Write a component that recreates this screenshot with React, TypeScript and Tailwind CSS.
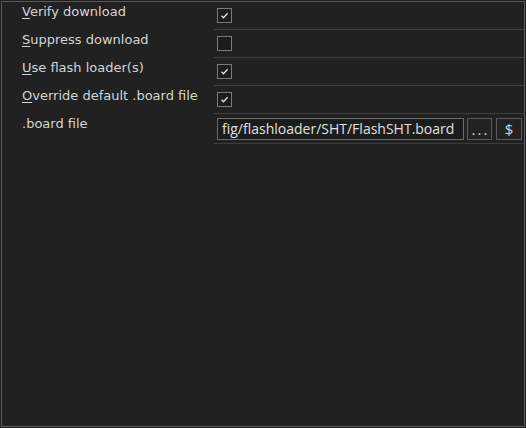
import React from "react";

const labelFont = { fontFamily: '"DejaVu Sans", Verdana, sans-serif' };

function Check({ checked }: { checked: boolean }) {
  return (
    <div className="w-[15px] h-[15px] border border-[#7a7a7a] bg-[#1c1c1c] flex items-center justify-center">
      {checked && (
        <svg width="11" height="11" viewBox="0 0 11 11">
          <path d="M2.5 5.8 L4.5 7.8 L8.6 3.2" stroke="#e0e0e0" strokeWidth="1.3" fill="none" />
        </svg>
      )}
    </div>
  );
}

function Label({ k, rest }: { k: string; rest: string }) {
  return (
    <div className="pl-[20px] pt-[1px] text-[13px] text-[#d4d4d4] leading-[18px]" style={labelFont}>
      {k && <span className="underline underline-offset-2">{k}</span>}
      {rest}
    </div>
  );
}

export default function App() {
  const rows = [
    { k: "V", rest: "erify download", checked: true },
    { k: "S", rest: "uppress download", checked: false },
    { k: "U", rest: "se flash loader(s)", checked: true },
    { k: "O", rest: "verride default .board file", checked: true },
  ];
  return (
    <div className="w-[526px] h-[428px] bg-[#1e1e1e] p-[1px]">
      <div className="w-full h-full border border-[#5c5c5c] bg-[#212121] flex flex-col">
        {rows.map((r) => (
          <div key={r.rest} className="flex h-[28px]">
            <div className="w-[212px] shrink-0">
              <Label k={r.k} rest={r.rest} />
            </div>
            <div className="flex-1 border-b border-[#3d3d3d] pl-[3px] pt-[6px]">
              <Check checked={r.checked} />
            </div>
          </div>
        ))}
        <div className="flex h-[30px]">
          <div className="w-[212px] shrink-0">
            <Label k="" rest=".board file" />
          </div>
          <div className="flex-1 border-b border-[#3d3d3d] pl-[3px] pt-[4px] flex">
            <div
              className="w-[247px] h-[22px] border border-[#6a6a6a] bg-[#1c1c1c] pl-[4px] text-[14px] leading-[20px] text-[#e0e0e0] overflow-hidden whitespace-nowrap"
              style={{ fontFamily: '"Open Sans", "Noto Sans", sans-serif' }}
            >
              fig/flashloader/SHT/FlashSHT.board
            </div>
            <div
              className="ml-[3px] w-[25px] h-[22px] border border-[#5a5a5a] bg-[#222] text-[15px] leading-[20px] tracking-[2px] pl-[2px] text-[#d4d4d4] text-center"
              style={{ fontFamily: '"Open Sans", sans-serif' }}
            >
              ...
            </div>
            <div
              className="ml-[4px] w-[26px] h-[22px] border border-[#5a5a5a] bg-[#222] text-[15px] leading-[20px] text-[#d4d4d4] text-center"
              style={{ fontFamily: '"Open Sans", sans-serif' }}
            >
              $
            </div>
          </div>
        </div>
      </div>
    </div>
  );
}
